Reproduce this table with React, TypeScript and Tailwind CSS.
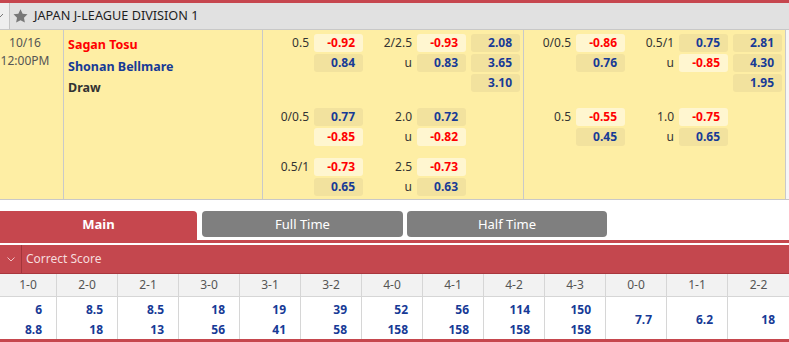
import React from "react";

type Row = { l1?: string; a?: string; l2?: string; b?: string; c?: string };

const font = { fontFamily: '"Noto Sans", "Open Sans", Arial, sans-serif' };

const fullTime: Row[][] = [
  [
    { l1: "0.5", a: "-0.92", l2: "2/2.5", b: "-0.93", c: "2.08" },
    { a: "0.84", l2: "u", b: "0.83", c: "3.65" },
    { c: "3.10" },
  ],
  [
    { l1: "0/0.5", a: "0.77", l2: "2.0", b: "0.72" },
    { a: "-0.85", l2: "u", b: "-0.82" },
  ],
  [
    { l1: "0.5/1", a: "-0.73", l2: "2.5", b: "-0.73" },
    { a: "0.65", l2: "u", b: "0.63" },
  ],
];

const halfTime: Row[][] = [
  [
    { l1: "0/0.5", a: "-0.86", l2: "0.5/1", b: "0.75", c: "2.81" },
    { a: "0.76", l2: "u", b: "-0.85", c: "4.30" },
    { c: "1.95" },
  ],
  [
    { l1: "0.5", a: "-0.55", l2: "1.0", b: "-0.75" },
    { a: "0.45", l2: "u", b: "0.65" },
  ],
];

const scores = [
  { s: "1-0", a: "6", b: "8.8" },
  { s: "2-0", a: "8.5", b: "18" },
  { s: "2-1", a: "8.5", b: "13" },
  { s: "3-0", a: "18", b: "56" },
  { s: "3-1", a: "19", b: "41" },
  { s: "3-2", a: "39", b: "58" },
  { s: "4-0", a: "52", b: "158" },
  { s: "4-1", a: "56", b: "158" },
  { s: "4-2", a: "114", b: "158" },
  { s: "4-3", a: "150", b: "158" },
  { s: "0-0", a: "7.7" },
  { s: "1-1", a: "6.2" },
  { s: "2-2", a: "18" },
];

function Odd({ v }: { v?: string }) {
  if (!v) return <div className="w-[49px] h-[18px]" />;
  const neg = v.startsWith("-");
  return (
    <div
      className={
        "w-[49px] h-[18px] rounded-[3px] pr-[8px] flex items-center justify-end text-[12px] font-bold " +
        (neg ? "bg-[#fff6d0] text-[#ff0000]" : "bg-[#f2e29e] text-[#173a96]")
      }
    >
      {v}
    </div>
  );
}

function OddsRow({ r, w1 }: { r: Row; w1: number }) {
  return (
    <div className="flex items-center h-[18px] text-[12px] text-[#333]">
      <div className="text-right pr-[5px]" style={{ width: w1 }}>
        {r.l1}
      </div>
      <Odd v={r.a} />
      <div className="w-[54px] text-right pr-[5px]">{r.l2}</div>
      <Odd v={r.b} />
      <div className="w-[5px]" />
      <Odd v={r.c} />
    </div>
  );
}

function Section({ groups, w1, width }: { groups: Row[][]; w1: number; width: string }) {
  return (
    <div className={width + " border-r border-[#c9c9c9] pt-[4px]"}>
      {groups.map((g, i) => (
        <div key={i} className={"flex flex-col gap-[2px] " + (i === 1 ? "mt-[16px]" : i === 2 ? "mt-[12px]" : "")}>
          {g.map((r, j) => (
            <OddsRow key={j} r={r} w1={w1} />
          ))}
        </div>
      ))}
    </div>
  );
}

export default function App() {
  return (
    <div className="w-[789px] h-[342px] overflow-hidden bg-white" style={font}>
      <div className="h-[3px] bg-[#c6464e]" />
      {/* league header */}
      <div className="h-[27px] flex items-center bg-[#e1e1e1] border-b border-[#c8c8c8]">
        <div className="w-[10px] h-full bg-[#eeeeee] border-r border-[#c4c4c4] flex items-center overflow-hidden">
          <svg width="6" height="6" viewBox="0 0 6 6" className="-ml-[3px]">
            <path d="M0 1 L3 4 L6 1" stroke="#777" strokeWidth="1" fill="none" />
          </svg>
        </div>
        <svg width="15" height="14" viewBox="0 0 24 23" className="ml-[3px]">
          <path d="M12 0.5l3.5 7.3 8 1-5.8 5.5 1.5 7.9L12 18.4 4.8 22.2l1.5-7.9L0.5 8.8l8-1z" fill="#787878" />
        </svg>
        <span className="ml-[6px] text-[12.7px] text-[#1e1e1e]">JAPAN J-LEAGUE DIVISION 1</span>
      </div>

      {/* match */}
      <div className="flex h-[170px] bg-[#feeea4] border-b border-[#c8c8c8]">
        <div className="w-[64px] border-r border-[#c9c9c9] pr-[13px] pt-[4px] text-center text-[12px] leading-[18px] text-[#555]">
          <div>10/16</div>
          <div>12:00PM</div>
        </div>
        <div className="w-[199px] border-r border-[#c9c9c9] pl-[4px] pt-[4px] text-[12.5px] font-bold leading-[21.5px]">
          <div className="text-[#ff0000]">Sagan Tosu</div>
          <div className="text-[#173a96]">Shonan Bellmare</div>
          <div className="text-[#333]">Draw</div>
        </div>
        <Section groups={fullTime} w1={51} width="w-[261px]" />
        <Section groups={halfTime} w1={52} width="w-[262px]" />
        <div className="flex-1 bg-[#f6f6f6]" />
      </div>

      {/* tabs */}
      <div className="mt-[11px] flex items-end border-b-[3px] border-[#c6474e] text-[13px] text-white">
        <div className="w-[197px] h-[29px] pb-[1px] bg-[#c6474e] rounded-tr-[4px] flex items-center justify-center font-bold">
          Main
        </div>
        <div className="ml-[5px] mb-[3px] w-[201px] h-[26px] pt-[2px] bg-[#7f7f7f] rounded-[4px] flex items-center justify-center">
          Full Time
        </div>
        <div className="ml-[4px] mb-[3px] w-[200px] h-[26px] pt-[2px] bg-[#7f7f7f] rounded-[4px] flex items-center justify-center">
          Half Time
        </div>
      </div>

      {/* correct score bar */}
      <div className="mt-[2px] h-[29px] flex bg-[#c4474e] border-b border-[#a9363d]">
        <div className="w-[22px] border-r border-[#a3353b] flex items-center justify-center">
          <svg width="8" height="5" viewBox="0 0 8 5">
            <path d="M0.5 0.5 L4 4 L7.5 0.5" stroke="#efc2c5" strokeWidth="1" fill="none" />
          </svg>
        </div>
        <div className="pl-[4px] flex items-center text-[12px] text-[#f6dcdd]">Correct Score</div>
      </div>

      {/* table */}
      <div className="grid grid-cols-[57px_repeat(12,1fr)] border-b-[3px] border-[#c6474e]">
        {scores.map((c, i) => (
          <div
            key={"h" + i}
            className={
              "h-[23px] bg-[#f2f2f2] border-b border-[#d6d6d6] flex items-center justify-center text-[12px] text-[#555] " +
              (i < 12 ? "border-r" : "")
            }
          >
            {c.s}
          </div>
        ))}
        {scores.map((c, i) => (
          <div
            key={"v" + i}
            className={
              "h-[42px] pt-[4px] flex flex-col justify-center items-end pr-[14px] text-[12px] font-bold leading-[20px] text-[#173a96] border-[#d6d6d6] " +
              (i < 12 ? "border-r" : "")
            }
          >
            <div>{c.a}</div>
            {c.b && <div>{c.b}</div>}
          </div>
        ))}
      </div>
    </div>
  );
}
